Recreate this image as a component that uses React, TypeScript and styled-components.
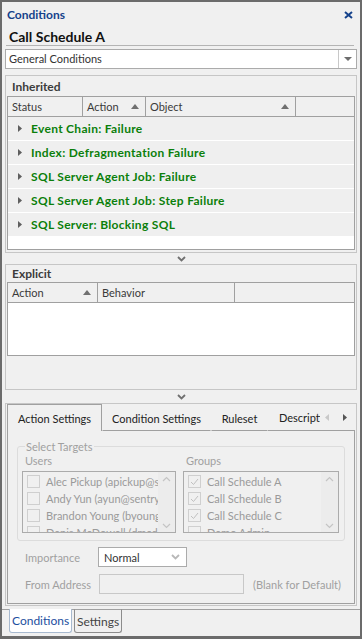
import React from 'react';
import styled, { createGlobalStyle } from 'styled-components';

const GlobalStyle = createGlobalStyle`
  html, body { margin: 0; padding: 0; }
  body {
    background: #6b6b6b;
    font-family: Lato, "Noto Sans", sans-serif;
    font-size: 11px;
    color: #333;
  }
  * { box-sizing: border-box; }
`;

const Window = styled.div`
  width: 362px;
  height: 639px;
  border: 2px solid #6b6b6b;
  border-bottom-width: 3px;
  background: #f0f0f0;
  display: flex;
  flex-direction: column;
  overflow: hidden;
`;

const TitleBar = styled.div`
  height: 25px;
  display: flex;
  align-items: center;
  justify-content: space-between;
  padding: 0 7px 0 5px;
  color: #15428b;
  font-weight: bold;
  font-size: 12px;
`;

const Body = styled.div`
  display: flex;
  flex-direction: column;
  padding: 0 3px;
`;

const Heading = styled.div`
  height: 19px;
  margin: 0 3px 0 1px;
  padding: 2px 0 0 3px;
  border-bottom: 1px solid #b4b4b4;
  font-weight: bold;
  font-size: 14px;
  color: #111;
  line-height: 16px;
`;

const Combo = styled.div`
  margin-top: 3px;
  height: 20px;
  display: flex;
  background: #fff;
  border: 1px solid #ababab;
  color: #333;
`;

const ComboText = styled.div`
  flex: 1;
  padding-left: 3px;
  line-height: 18px;
`;

const ComboButton = styled.div`
  width: 18px;
  border-left: 1px solid #c8c8c8;
  display: flex;
  align-items: center;
  justify-content: center;
`;

const DownTri = styled.span`
  width: 0;
  height: 0;
  border-left: 4px solid transparent;
  border-right: 4px solid transparent;
  border-top: 4px solid #6d6d6d;
`;

const Group = styled.div<{ $h: number; $mt?: number }>`
  height: ${p => p.$h}px;
  margin-top: ${p => p.$mt ?? 0}px;
  border: 1px solid #c6c6c6;
  padding: 0 1px;
  display: flex;
  flex-direction: column;
`;

const GroupTitle = styled.div<{ $h: number }>`
  height: ${p => p.$h}px;
  padding-left: 5px;
  display: flex;
  align-items: center;
  font-weight: bold;
  font-size: 12px;
  color: #3c3c3c;
`;

const Grid = styled.div<{ $h: number }>`
  height: ${p => p.$h}px;
  border: 1px solid #a0a0a0;
  background: #fff;
  display: flex;
  flex-direction: column;
`;

const HeaderRow = styled.div`
  height: 20px;
  display: flex;
  background: #f0f0f0;
  border-bottom: 1px solid #a0a0a0;
  flex-shrink: 0;
`;

const HeaderCell = styled.div<{ $w?: number }>`
  ${p => (p.$w ? `width: ${p.$w}px;` : 'flex: 1;')}
  display: flex;
  align-items: center;
  justify-content: space-between;
  padding: 0 6px 0 4px;
  border-right: 1px solid #a0a0a0;
  color: #3a3a3a;
  &:last-child { border-right: none; }
`;

const SortUp = styled.span`
  width: 0;
  height: 0;
  border-left: 4px solid transparent;
  border-right: 4px solid transparent;
  border-bottom: 5px solid #707070;
`;

const ConditionRow = styled.div`
  height: 24px;
  display: flex;
  align-items: center;
  gap: 9px;
  padding-left: 10px;
  background: #efefef;
  border-bottom: 1px solid #fff;
  color: #0b7f0b;
  font-weight: bold;
  font-size: 12px;
  letter-spacing: 0.3px;
`;

const Splitter = styled.div<{ $h: number }>`
  height: ${p => p.$h}px;
  display: flex;
  align-items: center;
  justify-content: center;
`;

const TabBox = styled.div`
  height: 203px;
  border: 1px solid #c6c6c6;
  padding: 0 1px;
  display: flex;
  flex-direction: column;
`;

const TabStrip = styled.div`
  height: 27px;
  display: flex;
  align-items: flex-end;
  flex-shrink: 0;
`;

const Tab = styled.div<{ $active?: boolean; $w: number }>`
  width: ${p => p.$w}px;
  height: ${p => (p.$active ? 27 : 26)}px;
  display: flex;
  align-items: center;
  justify-content: center;
  white-space: nowrap;
  color: #222;
  border: 1px solid ${p => (p.$active ? '#a0a0a0' : 'transparent')};
  border-bottom: ${p => (p.$active ? 'none' : '1px solid #a0a0a0')};
  background: #f0f0f0;
  flex-shrink: 0;
`;

const TabFiller = styled.div`
  flex: 1;
  height: 26px;
  display: flex;
  align-items: center;
  overflow: hidden;
  border-bottom: 1px solid #a0a0a0;
`;

const ClippedTab = styled.div`
  width: 52px;
  padding-left: 11px;
  overflow: hidden;
  white-space: nowrap;
  color: #222;
`;

const ScrollArrows = styled.div`
  display: flex;
  gap: 14px;
  align-items: center;
  padding-left: 5px;
`;

const TabPage = styled.div`
  height: 173px;
  border: 1px solid #a0a0a0;
  border-top: none;
  padding: 9px 9px 0 9px;
  display: flex;
  flex-direction: column;
  color: #a0a0a0;
`;

const Fieldset = styled.fieldset`
  margin: 0;
  height: 101px;
  padding: 0 4px;
  border: 1px solid #dcdcdc;
  border-radius: 3px;
  display: grid;
  grid-template-columns: 154px 156px;
  column-gap: 7px;
  align-content: start;
  legend {
    padding: 0 1px;
    margin-left: 3px;
    color: #a0a0a0;
    line-height: 13px;
  }
`;

const ListLabel = styled.div`
  height: 18px;
  padding-left: 3px;
  line-height: 16px;
`;

const ListBox = styled.div`
  height: 62px;
  border: 1px solid #ababab;
  display: flex;
  overflow: hidden;
`;

const ListItems = styled.div`
  flex: 1;
  overflow: hidden;
  padding-top: 1px;
`;

const ListItem = styled.div`
  height: 17px;
  display: flex;
  align-items: center;
  gap: 6px;
  padding-left: 4px;
  white-space: nowrap;
  color: #9a9a9a;
`;

const Check = styled.span`
  width: 13px;
  height: 13px;
  flex-shrink: 0;
  border: 1px solid #cfcfcf;
  display: flex;
  align-items: center;
  justify-content: center;
`;

const ScrollBar = styled.div`
  width: 17px;
  flex-shrink: 0;
  display: flex;
  flex-direction: column;
  justify-content: space-between;
  align-items: center;
  padding: 4px 0 3px;
  background: #ececec;
`;

const FormRow = styled.div<{ $mt: number }>`
  margin-top: ${p => p.$mt}px;
  height: 20px;
  display: flex;
  align-items: center;
  padding-left: 8px;
  white-space: nowrap;
`;

const FormLabel = styled.div`
  width: 73px;
`;

const Select = styled.div`
  width: 89px;
  height: 20px;
  border: 1px solid #ababab;
  background: #fff;
  display: flex;
  align-items: center;
  justify-content: space-between;
  padding: 0 6px 0 5px;
  color: #333;
`;

const TextInput = styled.div`
  width: 145px;
  height: 20px;
  margin-left: 1px;
  border: 1px solid #c8c8c8;
`;

const Hint = styled.div`
  margin-left: 9px;
`;

const BottomStrip = styled.div`
  margin-top: 3px;
  border-top: 1px solid #a0a0a0;
  display: flex;
  gap: 2px;
  padding-left: 7px;
`;

const BottomTab = styled.div<{ $active?: boolean }>`
  height: 24px;
  margin-top: -1px;
  padding: 0 2px;
  display: flex;
  align-items: center;
  font-size: 12px;
  border: 1px solid ${p => (p.$active ? '#a7b9cf' : '#8c8c8c')};
  border-top: ${p => (p.$active ? 'none' : '1px solid #a0a0a0')};
  border-radius: 0 0 3px 3px;
  background: ${p => (p.$active ? '#fff' : '#f0f0f0')};
  color: ${p => (p.$active ? '#1d4fa0' : '#444')};
`;

const Chevron = ({ color = '#707070' }: { color?: string }) => (
  <svg width="9" height="6" viewBox="0 0 9 6">
    <path d="M1 1 L4.5 4.5 L8 1" fill="none" stroke={color} strokeWidth="1.8" />
  </svg>
);

const ChevronUp = () => (
  <svg width="9" height="6" viewBox="0 0 9 6">
    <path d="M1 5 L4.5 1.5 L8 5" fill="none" stroke="#c4c4c4" strokeWidth="1.2" />
  </svg>
);

const ChevronDown = () => (
  <svg width="9" height="6" viewBox="0 0 9 6">
    <path d="M1 1 L4.5 4.5 L8 1" fill="none" stroke="#c4c4c4" strokeWidth="1.2" />
  </svg>
);

const Expand = () => (
  <svg width="4" height="7" viewBox="0 0 4 7">
    <path d="M0 0 L4 3.5 L0 7 Z" fill="#5f5f5f" />
  </svg>
);

const CloseX = () => (
  <svg width="9" height="8" viewBox="0 0 9 8">
    <path d="M1 1 L8 7 M8 1 L1 7" stroke="#15428b" strokeWidth="2" />
  </svg>
);

const Arrow = ({ dir, color }: { dir: 'left' | 'right'; color: string }) => (
  <svg width="4" height="7" viewBox="0 0 4 7">
    <path d={dir === 'right' ? 'M0 0 L4 3.5 L0 7 Z' : 'M4 0 L0 3.5 L4 7 Z'} fill={color} />
  </svg>
);

const Tick = () => (
  <svg width="9" height="8" viewBox="0 0 9 8">
    <path d="M1 4 L3.5 6.5 L8 1" fill="none" stroke="#c0c0c0" strokeWidth="1" />
  </svg>
);

const conditions = [
  'Event Chain: Failure',
  'Index: Defragmentation Failure',
  'SQL Server Agent Job: Failure',
  'SQL Server Agent Job: Step Failure',
  'SQL Server: Blocking SQL',
];

const users = [
  'Alec Pickup (apickup@sentryone.com)',
  'Andy Yun (ayun@sentryone.com)',
  'Brandon Young (byoung@sentryone.com)',
  'Denis McDowell (dmcdowell@sentryone.com)',
];

const groups = [
  { name: 'Call Schedule A', on: true },
  { name: 'Call Schedule B', on: true },
  { name: 'Call Schedule C', on: true },
  { name: 'Demo Admin', on: false },
];

export default function App() {
  return (
    <>
      <GlobalStyle />
      <Window>
        <TitleBar>
          <span>Conditions</span>
          <CloseX />
        </TitleBar>
        <Body>
          <Heading>Call Schedule A</Heading>
          <Combo>
            <ComboText>General Conditions</ComboText>
            <ComboButton><DownTri /></ComboButton>
          </Combo>

          <Group $h={178} $mt={6}>
            <GroupTitle $h={20}>Inherited</GroupTitle>
            <Grid $h={154}>
              <HeaderRow>
                <HeaderCell $w={75}>Status</HeaderCell>
                <HeaderCell $w={63}>Action <SortUp /></HeaderCell>
                <HeaderCell $w={150}>Object <SortUp /></HeaderCell>
                <HeaderCell />
              </HeaderRow>
              {conditions.map(c => (
                <ConditionRow key={c}>
                  <Expand />
                  {c}
                </ConditionRow>
              ))}
            </Grid>
          </Group>

          <Splitter $h={11}><Chevron /></Splitter>

          <Group $h={126}>
            <GroupTitle $h={17}>Explicit</GroupTitle>
            <Grid $h={74}>
              <HeaderRow>
                <HeaderCell $w={90}>Action <SortUp /></HeaderCell>
                <HeaderCell $w={137}>Behavior</HeaderCell>
                <HeaderCell />
              </HeaderRow>
            </Grid>
          </Group>

          <Splitter $h={13}><Chevron /></Splitter>

          <TabBox>
            <TabStrip>
              <Tab $active $w={95}>Action Settings</Tab>
              <Tab $w={109}>Condition Settings</Tab>
              <Tab $w={57}>Ruleset</Tab>
              <TabFiller>
                <ClippedTab>Description</ClippedTab>
                <ScrollArrows>
                  <Arrow dir="left" color="#c8c8c8" />
                  <Arrow dir="right" color="#555" />
                </ScrollArrows>
              </TabFiller>
            </TabStrip>
            <TabPage>
              <Fieldset>
                <legend>Select Targets</legend>
                <div>
                  <ListLabel>Users</ListLabel>
                  <ListBox>
                    <ListItems>
                      {users.map(u => (
                        <ListItem key={u}><Check />{u}</ListItem>
                      ))}
                    </ListItems>
                    <ScrollBar><ChevronUp /><ChevronDown /></ScrollBar>
                  </ListBox>
                </div>
                <div>
                  <ListLabel>Groups</ListLabel>
                  <ListBox>
                    <ListItems>
                      {groups.map(g => (
                        <ListItem key={g.name}><Check>{g.on && <Tick />}</Check>{g.name}</ListItem>
                      ))}
                    </ListItems>
                    <ScrollBar><ChevronUp /><ChevronDown /></ScrollBar>
                  </ListBox>
                </div>
              </Fieldset>
              <FormRow $mt={6}>
                <FormLabel>Importance</FormLabel>
                <Select>Normal <Chevron color="#b8b8b8" /></Select>
              </FormRow>
              <FormRow $mt={7}>
                <FormLabel>From Address</FormLabel>
                <TextInput />
                <Hint>(Blank for Default)</Hint>
              </FormRow>
            </TabPage>
          </TabBox>
        </Body>
        <BottomStrip>
          <BottomTab $active>Conditions</BottomTab>
          <BottomTab>Settings</BottomTab>
        </BottomStrip>
      </Window>
    </>
  );
}
